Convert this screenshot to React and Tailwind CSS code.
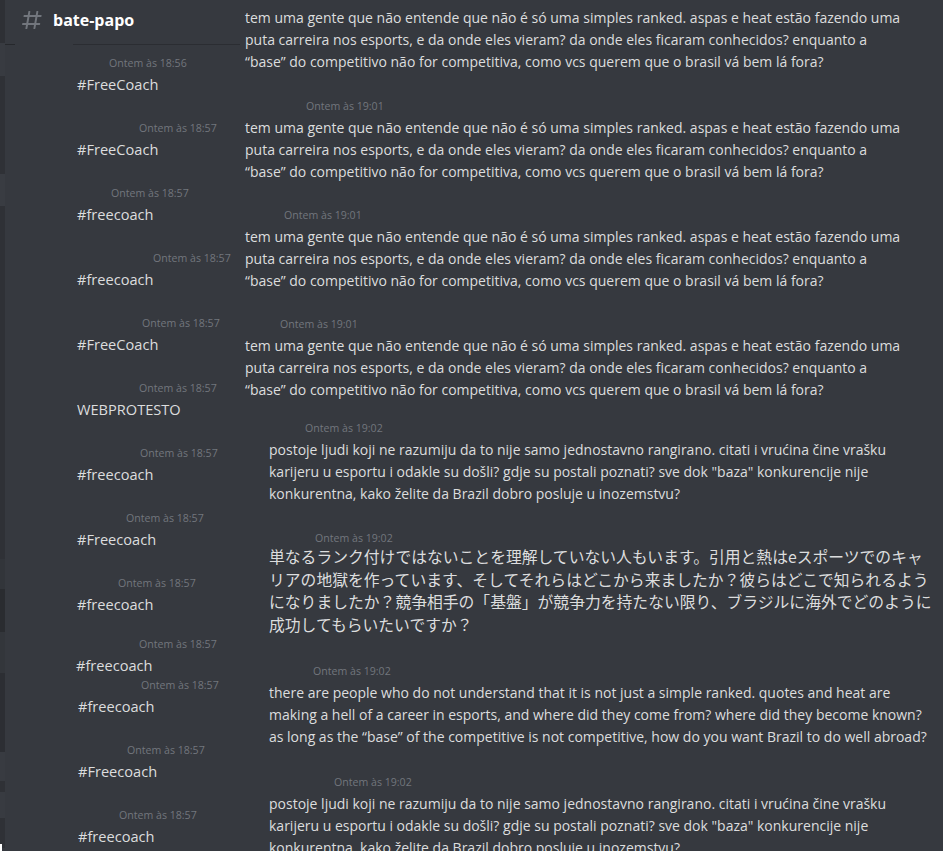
import React from 'react';

const SANS = "font-['Open_Sans','Noto_Sans',sans-serif]";

// left column: short tag messages
const leftItems = [
  { ts: 'Ontem às 18:56', text: '#FreeCoach', tsPad: 'pl-[104px]', gap: 'mt-0', textPad: 'pl-[72px]' },
  { ts: 'Ontem às 18:57', text: '#FreeCoach', tsPad: 'pl-[134px]', gap: 'mt-[25px]', textPad: 'pl-[72px]' },
  { ts: 'Ontem às 18:57', text: '#freecoach', tsPad: 'pl-[106px]', gap: 'mt-[25px]', textPad: 'pl-[72px]' },
  { ts: 'Ontem às 18:57', text: '#freecoach', tsPad: 'pl-[148px]', gap: 'mt-[25px]', textPad: 'pl-[72px]' },
  { ts: 'Ontem às 18:57', text: '#FreeCoach', tsPad: 'pl-[137px]', gap: 'mt-[25px]', textPad: 'pl-[72px]' },
  { ts: 'Ontem às 18:57', text: 'WEBPROTESTO', tsPad: 'pl-[134px]', gap: 'mt-[25px]', textPad: 'pl-[72px]' },
  { ts: 'Ontem às 18:57', text: '#freecoach', tsPad: 'pl-[135px]', gap: 'mt-[25px]', textPad: 'pl-[72px]' },
  { ts: 'Ontem às 18:57', text: '#Freecoach', tsPad: 'pl-[121px]', gap: 'mt-[25px]', textPad: 'pl-[72px]' },
  { ts: 'Ontem às 18:57', text: '#freecoach', tsPad: 'pl-[113px]', gap: 'mt-[25px]', textPad: 'pl-[72px]' },
  { ts: 'Ontem às 18:57', text: '#freecoach', tsPad: 'pl-[134px]', gap: 'mt-[21px]', textPad: 'pl-[71px]' },
  { ts: 'Ontem às 18:57', text: '#freecoach', tsPad: 'pl-[136px]', gap: 'mt-px', textPad: 'pl-[73px]' },
  { ts: 'Ontem às 18:57', text: '#Freecoach', tsPad: 'pl-[122px]', gap: 'mt-[25px]', textPad: 'pl-[73px]' },
  { ts: 'Ontem às 18:57', text: '#freecoach', tsPad: 'pl-[114px]', gap: 'mt-[25px]', textPad: 'pl-[73px]' },
];

const pt = [
  'tem uma gente que não entende que não é só uma simples ranked. aspas e heat estão fazendo uma',
  'puta carreira nos esports, e da onde eles vieram? da onde eles ficaram conhecidos? enquanto a',
  '“base” do competitivo não for competitiva, como vcs querem que o brasil vá bem lá fora?',
];
const hr = [
  'postoje ljudi koji ne razumiju da to nije samo jednostavno rangirano. citati i vrućina čine vrašku',
  'karijeru u esportu i odakle su došli? gdje su postali poznati? sve dok "baza" konkurencije nije',
  'konkurentna, kako želite da Brazil dobro posluje u inozemstvu?',
];
const ja = [
  '単なるランク付けではないことを理解していない人もいます。引用と熱はeスポーツでのキャ',
  'リアの地獄を作っています、そしてそれらはどこから来ましたか？彼らはどこで知られるよう',
  'になりましたか？競争相手の「基盤」が競争力を持たない限り、ブラジルに海外でどのように',
  '成功してもらいたいですか？',
];
const en = [
  'there are people who do not understand that it is not just a simple ranked. quotes and heat are',
  'making a hell of a career in esports, and where did they come from? where did they become known?',
  'as long as the “base” of the competitive is not competitive, how do you want Brazil to do well abroad?',
];

const rightItems = [
  { ts: 'Ontem às 19:01', lines: pt, tsPad: 'pl-[67px]', pad: 'pl-[5px] mt-[3px]', gap: 'mt-[-12px]' },
  { ts: 'Ontem às 19:01', lines: pt, tsPad: 'pl-[66px]', pad: 'pl-[5px] mt-[3px]', gap: 'mt-[25px]' },
  { ts: 'Ontem às 19:01', lines: pt, tsPad: 'pl-[44px]', pad: 'pl-[5px] mt-[3px]', gap: 'mt-[24px]' },
  { ts: 'Ontem às 19:01', lines: pt, tsPad: 'pl-[40px]', pad: 'pl-[5px] mt-[3px]', gap: 'mt-[24px]' },
  { ts: 'Ontem às 19:02', lines: hr, tsPad: 'pl-[65px]', pad: 'pl-[29px] mt-[3px]', gap: 'mt-[19px]' },
  { ts: 'Ontem às 19:02', lines: ja, tsPad: 'pl-[75px]', pad: 'pl-[29px] mt-0', gap: 'mt-[25px]', cjk: true },
  { ts: 'Ontem às 19:02', lines: en, tsPad: 'pl-[73px]', pad: 'pl-[29px] mt-[3px]', gap: 'mt-[26px]' },
  { ts: 'Ontem às 19:02', lines: hr, tsPad: 'pl-[94px]', pad: 'pl-[29px] mt-[3px]', gap: 'mt-[26px]' },
];

// darker strip down the left edge (bits of other panels showing through)
const strip = [
  { h: 'h-[43px]', c: 'bg-[#2e3035]' },
  { h: 'h-[33px]', c: 'bg-[#383b41]' },
  { h: 'h-[98px]', c: 'bg-[#2f3136]' },
  { h: 'h-[32px]', c: 'bg-[#393c42]' },
  { h: 'h-[353px]', c: 'bg-[#2f3136]' },
  { h: 'h-[30px]', c: 'bg-[#32353a]' },
  { h: 'h-[43px]', c: 'bg-[#2a2c30]' },
  { h: 'h-[41px]', c: 'bg-[#33363b]' },
  { h: 'h-[79px]', c: 'bg-[#2c2e33]' },
  { h: 'h-[29px]', c: 'bg-[#383b41]' },
  { h: 'h-[11px]', c: 'bg-[#2f3136]' },
  { h: 'h-[26px]', c: 'bg-[#383b41]' },
  { h: 'h-[30px]', c: 'bg-[#2f3136]' },
];

function HashIcon() {
  return (
    <svg width="24" height="24" viewBox="0 0 24 24" className="text-[#72767d]">
      <path
        fill="currentColor"
        fillRule="evenodd"
        d="M5.88657 21C5.57547 21 5.3399 20.7189 5.39427 20.4126L6.00001 17H2.59511C2.28449 17 2.04905 16.7198 2.10259 16.4138L2.27759 15.4138C2.31946 15.1746 2.52722 15 2.77011 15H6.35001L7.41001 9H4.00511C3.69449 9 3.45905 8.71977 3.51259 8.41381L3.68759 7.41381C3.72946 7.17456 3.93722 7 4.18011 7H7.76001L8.39677 3.41262C8.43914 3.17391 8.64664 3 8.88907 3H9.87344C10.1845 3 10.4201 3.28107 10.3657 3.58738L9.76001 7H15.76L16.3968 3.41262C16.4391 3.17391 16.6466 3 16.8891 3H17.8734C18.1845 3 18.4201 3.28107 18.3657 3.58738L17.76 7H21.1649C21.4755 7 21.711 7.28023 21.6574 7.58619L21.4824 8.58619C21.4406 8.82544 21.2328 9 20.9899 9H17.41L16.35 15H19.7549C20.0655 15 20.301 15.2802 20.2474 15.5862L20.0724 16.5862C20.0306 16.8254 19.8228 17 19.5799 17H16L15.3632 20.5874C15.3209 20.8261 15.1134 21 14.8709 21H13.8866C13.5755 21 13.3399 20.7189 13.3943 20.4126L14 17H8.00001L7.36325 20.5874C7.32088 20.8261 7.11337 21 6.87094 21H5.88657ZM9.41045 9L8.35045 15H14.3504L15.4104 9H9.41045Z"
      />
    </svg>
  );
}

function Timestamp({ children, className }) {
  return (
    <div className={`h-4 text-[10.6px] leading-4 text-[#72767d] whitespace-nowrap ${className}`}>{children}</div>
  );
}

export default function App() {
  return (
    <div className={`flex h-[851px] w-[943px] overflow-hidden bg-[#36393f] ${SANS}`}>
      {/* edge strip */}
      <div className="flex w-[5px] shrink-0 flex-col">
        {strip.map((s, i) => (
          <div key={i} className={`${s.h} ${s.c} shrink-0`} />
        ))}
        <div className="flex flex-1">
          <div className="mt-[-4px] h-[30px] w-[2px] bg-white" />
        </div>
      </div>

      {/* left panel */}
      <div className="flex w-[235px] shrink-0 flex-col">
        <div className="flex h-[44px] items-center gap-[9px] pb-[5px] pl-[15px]">
          <HashIcon />
          <span className="text-[16px] font-bold text-white">bate-papo</span>
        </div>
        <div className="flex h-px">
          <div className="w-[10px] bg-[#26282c]" />
          <div className="w-[58px]" />
          <div className="flex-1 bg-[#2b2d32]" />
        </div>
        <div className="flex flex-col pt-[10px]">
          {leftItems.map((m, i) => (
            <div key={i} className={`flex flex-col ${m.gap}`}>
              <Timestamp className={m.tsPad}>{m.ts}</Timestamp>
              <div className={`mt-[2px] h-[22px] text-[14.6px] leading-[22px] text-[#dcddde] ${m.textPad}`}>{m.text}</div>
            </div>
          ))}
        </div>
      </div>

      {/* right panel */}
      <div className="flex min-w-0 flex-1 flex-col">
        {rightItems.map((m, i) => (
          <div key={i} className={`flex flex-col ${m.gap}`}>
            <Timestamp className={m.tsPad}>{m.ts}</Timestamp>
            <div className={`flex flex-col text-[#dcddde] ${m.pad}`}>
              {m.lines.map((l, j) => (
                <div
                  key={j}
                  className={
                    m.cjk
                      ? "whitespace-nowrap font-['Noto_Sans_CJK_JP',sans-serif] text-[15.8px] leading-[22.7px]"
                      : 'whitespace-nowrap text-[14px] leading-[22px]'
                  }
                >
                  {l}
                </div>
              ))}
            </div>
          </div>
        ))}
      </div>
    </div>
  );
}
